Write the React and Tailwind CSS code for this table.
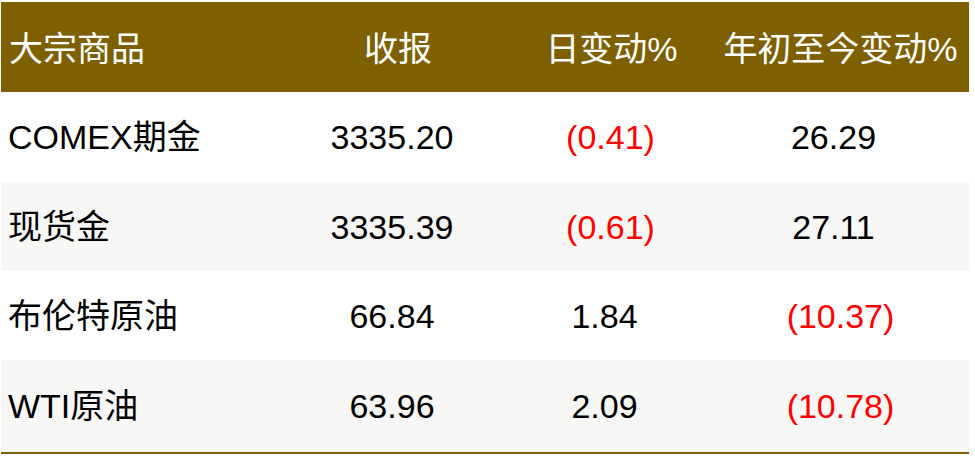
import React from "react";

const rows = [
  { name: "COMEX期金", close: "3335.20", day: "(0.41)", dayRed: true, ytd: "26.29", ytdRed: false, bg: "bg-white", h: "h-[90px]" },
  { name: "现货金", close: "3335.39", day: "(0.61)", dayRed: true, ytd: "27.11", ytdRed: false, bg: "bg-[#f7f7f5]", h: "h-[89px]" },
  { name: "布伦特原油", close: "66.84", day: "1.84", dayRed: false, ytd: "(10.37)", ytdRed: true, bg: "bg-white", h: "h-[89px]" },
  { name: "WTI原油", close: "63.96", day: "2.09", dayRed: false, ytd: "(10.78)", ytdRed: true, bg: "bg-[#f7f7f5]", h: "h-[92px]" },
];

export default function App() {
  return (
    <div
      className="w-[975px] h-[459px] bg-white pt-[2px] pl-[1px]"
      style={{ fontFamily: '"Liberation Sans", "Noto Sans CJK SC", sans-serif' }}
    >
      <div className="w-[968px] text-[34px] leading-none">
        <div className="grid grid-cols-[284px_226px_201px_257px] h-[90px] bg-[#7f6000] text-white items-center pt-[4px]">
          <div className="pl-[8px]">大宗商品</div>
          <div className="text-center">收报</div>
          <div className="text-center">日变动%</div>
          <div className="text-center">年初至今变动%</div>
        </div>
        {rows.map((r) => (
          <div
            key={r.name}
            className={`grid grid-cols-[284px_226px_201px_257px] ${r.h} ${r.bg} text-black items-center`}
          >
            <div className="pl-[7px]">{r.name}</div>
            <div className="text-center pr-[12px]">{r.close}</div>
            <div className={`text-center ${r.dayRed ? "text-[#ff0000] pr-[2px]" : "pr-[14px]"}`}>{r.day}</div>
            <div className={`text-center ${r.ytdRed ? "text-[#ff0000] pr-0" : "pr-[14px]"}`}>{r.ytd}</div>
          </div>
        ))}
        <div className="h-[2px] bg-[#7f6000]"></div>
      </div>
    </div>
  );
}
